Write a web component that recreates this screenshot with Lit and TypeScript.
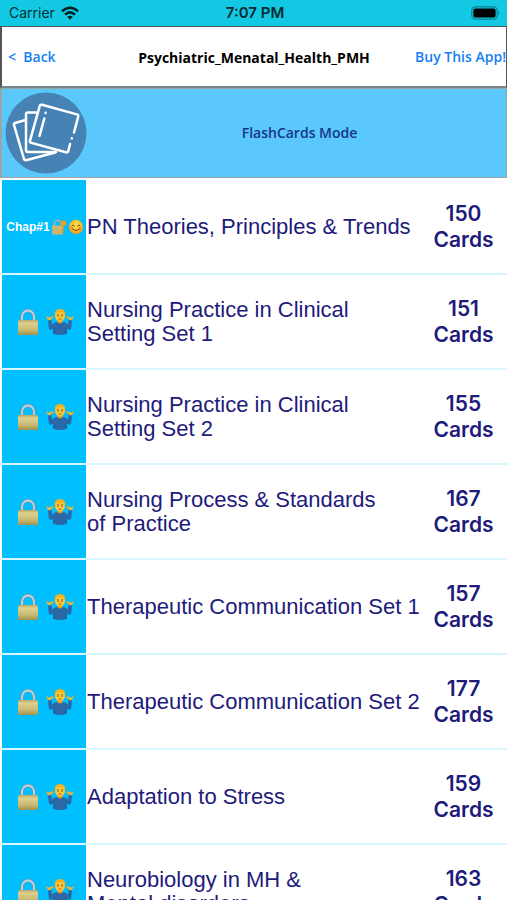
import { LitElement, html, css } from "lit";
import { customElement, property } from "lit/decorators.js";

interface Chapter {
  title: string;
  cards: number;
}

const chapters: Chapter[] = [
  { title: "PN Theories, Principles & Trends", cards: 150 },
  { title: "Nursing Practice in Clinical\nSetting Set 1", cards: 151 },
  { title: "Nursing Practice in Clinical\nSetting Set 2", cards: 155 },
  { title: "Nursing Process & Standards\nof Practice", cards: 167 },
  { title: "Therapeutic Communication Set 1", cards: 157 },
  { title: "Therapeutic Communication Set 2", cards: 177 },
  { title: "Adaptation to Stress", cards: 159 },
  { title: "Neurobiology in MH &\nMental disorders", cards: 163 },
];

const padlock = html`<svg class="lock" viewBox="0 0 24 28" aria-hidden="true">
  <defs>
    <linearGradient id="brass" x1="0" x2="0" y1="0" y2="1">
      <stop offset="0" stop-color="#b7a566" />
      <stop offset=".2" stop-color="#ddd08f" />
      <stop offset=".65" stop-color="#c9b972" />
      <stop offset="1" stop-color="#a39250" />
    </linearGradient>
  </defs>
  <path d="M6 14V9a6 6.500 0 0 1 12 0v5" fill="none" stroke="#6f98ae" stroke-width="3.400" />
  <path d="M6 14V9a6 6.500 0 0 1 12 0v5" fill="none" stroke="#bcd4e0" stroke-width="1.800" />
  <rect x="2" y="12" width="20" height="15" rx="1.600" fill="url(#brass)" />
</svg>`;

const shrug = html`<svg class="shrug" viewBox="0 0 28 28" aria-hidden="true">
  <path d="M9.500 14.200q4.500-1 9 0 2.300.7 3.300 2.800l.9-5.500 3.300.8-.7 7.200q-.5 3.500-4.300 1.500l-.9-.5.4 5.500q-6.500 2-13 0l.4-5.500-.9.500q-3.800 2-4.300-1.500L2 12.300l3.300-.8.9 5.500q1-2.100 3.300-2.800z" fill="#2b68a8" />
  <path d="M8 20.500 7.600 25.500M20 20.500l.4 5" stroke="#1d4f86" stroke-width=".9" />
  <path d="M2.200 12 .3 8.800l.8-.4 1.600 1.300L4.800 9l3-.4-.2 1-2.300 1L5 12zM25.800 12l1.900-3.200-.8-.4-1.600 1.300-2.100-.7-3-.4.2 1 2.300 1 .3 1.400z" fill="#e9bd42" stroke="#d9a62e" stroke-width=".4" />
  <path d="M11.500 11.500h5v3q-2.500 2-5 0z" fill="#dd9c1e" />
  <ellipse cx="14" cy="7.800" rx="5" ry="5.700" fill="#fcc83a" />
  <path d="M8.800 7.500Q8 1 14 1t5.200 6.500Q18.300 5 16.800 4q-3.800.8-6 .2-1.300 1.300-2 3.300z" fill="#f5b01c" />
  <path d="M10.800 6.600h2.200M15 6.600h2.200" stroke="#a06b1a" stroke-width=".7" />
  <circle cx="12" cy="8" r=".7" fill="#5b3511" />
  <circle cx="16" cy="8" r=".7" fill="#5b3511" />
  <path d="M12.400 11.300q1.600-.8 3.200 0" fill="none" stroke="#b0451c" stroke-width=".8" />
</svg>`;

const keyLock = html`<svg class="small" viewBox="0 0 16 16" aria-hidden="true">
  <path d="M3.500 8V5a3.500 3.700 0 0 1 7 0v3" fill="none" stroke="#a3b3a6" stroke-width="1.700" />
  <rect x="1" y="6.500" width="11" height="9" rx=".8" fill="#c9b472" />
  <circle cx="12.500" cy="4.200" r="2.700" fill="#e9a62f" stroke="#c98c28" stroke-width=".5" />
  <path d="m11.700 6-.9 8 1.400 1 1-8.700z" fill="#d9962c" />
</svg>`;

const smile = html`<svg class="small" viewBox="0 0 16 16" aria-hidden="true">
  <defs>
    <radialGradient id="face" cy=".4">
      <stop offset="0" stop-color="#ffe04d" />
      <stop offset=".7" stop-color="#fcc62f" />
      <stop offset="1" stop-color="#eda51d" />
    </radialGradient>
  </defs>
  <circle cx="8" cy="8" r="7.200" fill="url(#face)" />
  <circle cx="3.600" cy="9.200" r="1.700" fill="#f88a3c" opacity=".75" />
  <circle cx="12.400" cy="9.200" r="1.700" fill="#f88a3c" opacity=".75" />
  <path d="M4 6.800q1.200-1.800 2.400 0M9.600 6.800q1.200-1.800 2.400 0M4.600 10q3.400 3.200 6.800 0" fill="none" stroke="#70420e" stroke-width="1" stroke-linecap="round" />
</svg>`;

@customElement("chapter-row")
export class ChapterRow extends LitElement {
  @property({ attribute: false }) chapter!: Chapter;
  @property({ type: Boolean }) open = false;

  static styles = css`
    :host {
      display: block;
    }
    .row {
      display: grid;
      grid-template-columns: 84px minmax(0, 1fr) 87px;
      align-items: center;
      width: 100%;
      height: 95px;
      padding: 0 0 0 2px;
      border: 0;
      border-bottom: 2px solid #d9f6ff;
      background: #fff;
      color: #1e1b7b;
      text-align: left;
    }
    .tile {
      display: flex;
      align-items: center;
      justify-content: center;
      gap: 6px;
      height: 100%;
      padding-left: 2px;
      background: #00bfff;
      box-sizing: border-box;
      color: #fff;
      font: 700 12px/16px "Liberation Sans", Arial, sans-serif;
    }
    .tile.open {
      gap: 1px;
    }
    .lock {
      width: 24px;
      height: 28px;
    }
    .shrug {
      width: 28px;
      height: 28px;
    }
    .small {
      width: 16px;
      height: 16px;
    }
    .title {
      padding-left: 1px;
      font: 400 22px/24px "Liberation Sans", Arial, sans-serif;
      white-space: pre-line;
    }
    .count {
      display: flex;
      flex-direction: column;
      font: 600 21px/26px Inter, sans-serif;
      text-align: center;
    }
  `;

  render() {
    return html`<button class="row">
      <span class="tile ${this.open ? "open" : ""}">
        ${this.open ? html`<span>Chap#1</span>${keyLock}${smile}` : html`${padlock}${shrug}`}
      </span>
      <span class="title">${this.chapter.title}</span>
      <span class="count"><span>${this.chapter.cards}</span><span>Cards</span></span>
    </button>`;
  }
}

@customElement("app-root")
export class AppRoot extends LitElement {
  static styles = css`
    :host {
      display: block;
      height: 100vh;
      overflow: hidden;
      background: #fff;
    }
    * {
      box-sizing: border-box;
    }
    .status {
      display: grid;
      grid-template-columns: 1fr auto 1fr;
      align-items: center;
      height: 26px;
      padding: 0 6px 0 9px;
      background: #12c8e2;
      color: #083037;
      font: 400 14px/20px Inter, sans-serif;
    }
    .carrier {
      display: flex;
      align-items: center;
      gap: 6px;
    }
    .time {
      font-size: 15px;
      font-weight: 600;
      color: #062a30;
    }
    .wifi {
      width: 18px;
      height: 14px;
    }
    .battery {
      justify-self: end;
      width: 30px;
      height: 14px;
    }
    .nav {
      display: grid;
      grid-template-columns: 1fr auto 1fr;
      align-items: center;
      height: 62px;
      border: 1px solid #555;
      border-left-width: 2px;
      border-bottom: 2px solid #7b8589;
      font: 600 14px/20px "Open Sans", sans-serif;
      white-space: nowrap;
    }
    .nav a {
      color: #1580f5;
      text-decoration: none;
    }
    .back {
      padding-left: 6px;
      white-space: pre;
    }
    .buy {
      justify-self: end;
    }
    h1 {
      margin: 0;
      padding-top: 2px;
      color: #000;
      font: inherit;
      font-weight: 700;
    }
    .mode {
      display: grid;
      grid-template-columns: 88px 1fr;
      align-items: center;
      width: 100%;
      height: 90px;
      padding: 0 0 0 3px;
      border: 1px solid #9aa5aa;
      border-left-width: 2px;
      background: #5ac8fa;
      color: #16358c;
      font: 600 14px/20px "Open Sans", sans-serif;
    }
    .stack {
      width: 82px;
      height: 82px;
    }
    ul {
      margin: 0;
      padding: 2px 0 0;
      list-style: none;
    }
  `;

  render() {
    return html`
      <div class="status">
        <span class="carrier">
          Carrier
          <svg class="wifi" viewBox="0 0 18 14" aria-hidden="true">
            <g fill="none" stroke="#041e22" stroke-width="2.500">
              <path d="M1 5.300q8-7.200 16 0" />
              <path d="M4 8.600q5-4.400 10 0" />
            </g>
            <path d="M6.200 10.800q2.800-2.300 5.600 0L9 13.700z" fill="#041e22" />
          </svg>
        </span>
        <span class="time">7:07 PM</span>
        <svg class="battery" viewBox="0 0 30 14" aria-hidden="true">
          <rect x=".8" y=".8" width="25.400" height="12.400" rx="3.600" fill="none" stroke="#0c8090" stroke-width="1.200" />
          <rect x="2.400" y="2.400" width="22.200" height="9.200" rx="2" />
          <path d="M27.500 4.800q2 2.200 0 4.400z" fill="#0c8090" />
        </svg>
      </div>
      <header class="nav">
        <a class="back" href="#back">&lt;  Back</a>
        <h1>Psychiatric_Menatal_Health_PMH</h1>
        <a class="buy" href="#buy">Buy This App!</a>
      </header>
      <button class="mode">
        <svg class="stack" viewBox="0 0 82 82" aria-hidden="true">
          <circle cx="41" cy="41" r="40.500" fill="#4682b4" />
          <g fill="#4682b4" stroke="#fff" stroke-width="2.500" stroke-linejoin="round" stroke-linecap="round">
            <path d="M20.500 28 10 31q-1.500.5-1 2l10 34q.6 1.600 2.200 1.200L50 60.500" />
            <path d="M34 20.500H23q-2 0-2 2V58q0 2 2 2h28" />
            <path d="m69 40.500 4.200-15.800q.4-1.800-1.400-2.300L37 12.800q-1.800-.5-2.300 1.300L25 48.600q-.5 1.800 1.300 2.300L61 60.300q1.800.5 2.300-1.300l1.800-7" />
            <path d="M39.300 26.500 34.500 44M66.800 46.200v.2M40.600 20.800v.2" />
          </g>
        </svg>
        <span>FlashCards Mode</span>
      </button>
      <ul>
        ${chapters.map(
          (chapter, i) => html`<li><chapter-row .chapter=${chapter} ?open=${i === 0}></chapter-row></li>`,
        )}
      </ul>
    `;
  }
}
